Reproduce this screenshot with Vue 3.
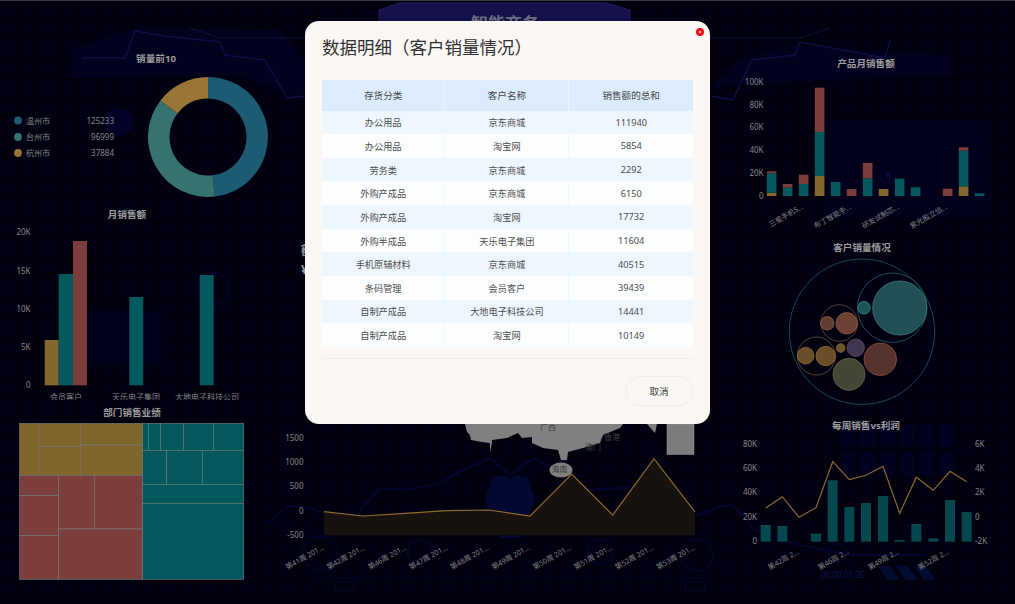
<script setup>
const rows = [
  ['办公用品', '京东商城', '111940'],
  ['办公用品', '淘宝网', '5854'],
  ['劳务类', '京东商城', '2292'],
  ['外购产成品', '京东商城', '6150'],
  ['外购产成品', '淘宝网', '17732'],
  ['外购半成品', '天乐电子集团', '11604'],
  ['手机原辅材料', '京东商城', '40515'],
  ['条码管理', '会员客户', '39439'],
  ['自制产成品', '大地电子科技公司', '14441'],
  ['自制产成品', '淘宝网', '10149']
]

const YEL = '#84672f'
const TEAL = '#04595f'
const RED = '#7c3e3d'

// donut
const legend = [
  { name: '温州市', value: 125233, color: '#1d5a73', y: 120.5 },
  { name: '台州市', value: 96999, color: '#36736f', y: 137 },
  { name: '杭州市', value: 37884, color: '#9a7636', y: 153 }
]
const total = legend.reduce((s, l) => s + l.value, 0)
let acc = 0
const pt = (r, a) => `${(208 + r * Math.sin(a)).toFixed(2)} ${(137 - r * Math.cos(a)).toFixed(2)}`
const arcs = legend.map((l) => {
  const a0 = (acc / total) * Math.PI * 2
  acc += l.value
  const a1 = (acc / total) * Math.PI * 2
  const big = a1 - a0 > Math.PI ? 1 : 0
  return {
    color: l.color,
    d: `M${pt(60, a0)} A60 60 0 ${big} 1 ${pt(60, a1)} L${pt(38.5, a1)} A38.5 38.5 0 ${big} 0 ${pt(38.5, a0)} Z`
  }
})

// monthly sales
const monthTicks = [['20K', 232], ['15K', 270.5], ['10K', 309], ['5K', 347], ['0', 385]]
const monthBars = [
  [44.7, 340, YEL], [58.7, 274, TEAL], [73, 241, RED],
  [129.3, 297, TEAL], [199.7, 275, TEAL]
].map(([x, y, c]) => ({ x, y, c, h: 385.3 - y }))
const monthLabels = [['会员客户', 66], ['天乐电子集团', 136], ['大地电子科技公司', 207]]

// treemap (coordinates measured at 3x)
const tm = (n) => n / 3
const tile = (x0, y0, x1, y1, c) => ({ x: tm(x0), y: 400 + tm(y0), w: tm(x1 - x0), h: tm(y1 - y0), c })
const TY = '#80652c'
const treeTiles = [
  tile(59, 70, 115, 226, TY), tile(115, 70, 241, 140, TY), tile(115, 140, 241, 226, TY),
  tile(241, 70, 428, 135, TY), tile(241, 135, 428, 226, TY),
  tile(59, 226, 176, 286, RED), tile(59, 286, 176, 406, RED), tile(59, 406, 176, 538, RED),
  tile(176, 226, 283, 387, RED), tile(283, 226, 428, 387, RED), tile(176, 387, 428, 538, RED),
  tile(428, 70, 445, 151, TEAL), tile(445, 70, 481, 151, TEAL), tile(481, 70, 550, 151, TEAL),
  tile(550, 70, 640, 151, TEAL), tile(640, 70, 731, 151, TEAL),
  tile(428, 151, 500, 253, TEAL), tile(500, 151, 607, 253, TEAL), tile(607, 151, 731, 253, TEAL),
  tile(428, 253, 731, 310, TEAL), tile(428, 310, 731, 538, TEAL)
]

// product bars (3x coordinates)
const prodX = [185, 233, 281, 329, 377, 425, 473, 521, 569, 617, 713, 761, 809]
const prodStacks = [
  [[458, 468, YEL], [400, 458, TEAL], [394, 400, RED]],
  [[443, 468, TEAL], [432, 443, RED]],
  [[432, 468, TEAL], [404, 432, RED]],
  [[408, 468, YEL], [276, 408, TEAL], [143, 276, RED]],
  [[426, 468, TEAL]],
  [[447, 468, RED]],
  [[415, 468, TEAL], [369, 415, RED]],
  [[447, 468, YEL]],
  [[416, 468, TEAL]],
  [[442, 468, TEAL]],
  [[446, 468, RED]],
  [[439, 468, YEL], [332, 439, TEAL], [322, 332, RED]],
  [[460, 468, TEAL]]
]
const prodBars = prodStacks.flatMap((stack, i) =>
  stack.map(([t, b, c]) => ({ x: 710 + (prodX[i] - 14.5) / 3, y: 40 + t / 3, h: (b - t) / 3, c }))
)
const prodTicks = [['100K', 81.7], ['80K', 104.7], ['60K', 127.3], ['40K', 150], ['20K', 172.7], ['0', 195.7]]
const prodLabels = [['三星手机S...', 804, 208], ['布丁智能手...', 852, 208], ['研发试制芯...', 900, 208], ['紫光股立信...', 948, 208]]

// bubbles
const bubbles = [
  { x: 862, y: 331.7, r: 72.7, f: 'none', s: '#1a5a62' },
  { x: 892.3, y: 307.7, r: 34.7, f: 'none', s: '#20666b' },
  { x: 899.7, y: 308, r: 27, f: '#224f53', s: '#3a8484' },
  { x: 864, y: 307.7, r: 6.3, f: '#1c5559', s: '#3a8484' },
  { x: 839.3, y: 323, r: 18.3, f: 'none', s: '#6e4a3a' },
  { x: 827.3, y: 323.3, r: 6.7, f: '#5e3d32', s: '#96604a' },
  { x: 846.7, y: 323.3, r: 10.7, f: '#6c4034', s: '#a05c48' },
  { x: 816.3, y: 356, r: 19, f: 'none', s: '#6c5038' },
  { x: 805.7, y: 355.7, r: 8.3, f: '#6a4e2c', s: '#94702e' },
  { x: 825.7, y: 356, r: 9.7, f: '#6a4e2c', s: '#94702e' },
  { x: 840.7, y: 348, r: 4.3, f: '#6c552b', s: '#86682c' },
  { x: 855.7, y: 347.7, r: 8.7, f: '#3e3650', s: '#6c4a4a' },
  { x: 880.3, y: 359.3, r: 16.3, f: '#56322c', s: '#96483c' },
  { x: 849, y: 374.3, r: 16, f: '#454536', s: '#686852' }
]

// weekly (centre)
const lineZ = [[72, 635], [188, 648], [315, 640], [440, 632], [566, 630], [690, 648], [815, 522], [938, 645], [1062, 476], [1185, 636]]
const linePts = lineZ.map(([x, y]) => `${(300 + x / 3).toFixed(1)},${(300 + y / 3).toFixed(1)}`).join(' ')
const areaPts = `324,535.3 ${linePts} 695,535.3`
const lineTicks = [['1500', 438], ['1000', 462], ['500', 486], ['0', 510.5], ['-500', 535]]
const weeks = ['第41周', '第42周', '第46周', '第47周', '第48周', '第49周', '第50周', '第51周', '第52周', '第53周']
const lineLabels = weeks.map((w, i) => [`${w} 201...`, 324.5 + i * 41.2, 549])

// weekly vs profit (right)
const wkX = [167, 217, 318, 368, 418, 468, 519, 569, 619, 670, 720, 770]
const wkTop = [330, 333, 356, 196, 276, 264, 243, 375, 327, 370, 255, 291]
const wkBars = wkX.map((x, i) => ({ x: 710 + (x - 15) / 3, y: 415 + wkTop[i] / 3, h: (380 - wkTop[i]) / 3 }))
const wkLine = [[167, 279], [217, 245], [267, 307], [318, 278], [368, 140], [418, 194], [468, 181], [519, 154], [569, 295], [619, 187], [670, 226], [720, 169], [770, 200]]
  .map(([x, y]) => `${(710 + x / 3).toFixed(1)},${(415 + y / 3).toFixed(1)}`).join(' ')
const wkYs = [443.7, 468, 492.3, 517, 541]
const wkLeft = ['80K', '60K', '40K', '20K', '0']
const wkRight = ['6K', '4K', '2K', '0', '-2K']
const wkLabels = [['第42周 2...', 799.5, 553], ['第46周 2...', 849.5, 553], ['第49周 2...', 899.5, 553], ['第52周 2...', 949.5, 553]]

// background tiles on the right
const bgTiles = []
for (let c = 0; c < 6; c++) for (let r = 0; r < 2; r++) bgTiles.push({ x: 841 + c * 19.6, y: 424 + r * 28, key: `${c}-${r}` })
</script>

<template>
  <div class="screen">
    <svg class="backdrop" viewBox="0 0 1015 604" aria-hidden="true">
      <defs>
        <pattern id="mesh" width="5" height="5" patternUnits="userSpaceOnUse">
          <path d="M5 0H0V5" fill="none" stroke="#03031c" stroke-width="0.5" />
        </pattern>
      </defs>
      <rect width="1015" height="604" fill="url(#mesh)" />
      <polygon points="72,50 130,28 280,30 304,60 304,100 240,75 110,78 72,78" fill="#02021e" />
      <polygon points="710,90 740,60 790,45 950,55 950,75 730,85" fill="#02021e" />
      <polyline points="190,28 220,38 305,38" class="bg-line" />
      <polyline points="710,38 800,38 830,28" class="bg-line" />
      <polyline points="82,58 110,58 125,58 135,31 165,36 220,42 225,55 265,60 287,98 305,96" class="bg-thick" />
      <polyline points="712,96 733,100 752,60 795,55 800,42 885,58 890,40" class="bg-thick" />
      <polyline points="270,523 287,506 307,507 337,518 358,513 380,488 410,490 443,482 457,473 490,458 510,475 533,458 570,477 590,490 637,487 667,513 693,517 720,507 733,505 755,530 800,545 850,555 920,555" class="bg-wave" />
      <circle cx="320" cy="553" r="17" class="bg-ring" />
      <circle cx="420" cy="552" r="12" class="bg-ring" />
      <circle cx="600" cy="552" r="12" class="bg-ring" />
      <circle cx="697" cy="555" r="16" class="bg-ring" />
      <circle cx="213" cy="289" r="16" class="bg-ring" />
      <circle cx="838" cy="553" r="9" class="bg-ring" />
      <polygon points="492,478 505,475 510,480 515,475 528,478 535,500 520,538 500,538 485,500" fill="#020830" />
      <rect x="86" y="310" width="75" height="56" rx="6" fill="#01011a" />
      <rect x="825" y="120" width="165" height="98" fill="#01011c" />
      <circle cx="888" cy="175" r="8" class="bg-ring" />
      <circle cx="888" cy="175" r="3" fill="#07073a" />
      <circle cx="119" cy="122" r="14" fill="#03032a" />
      <rect v-for="t in bgTiles" :key="t.key" :x="t.x" :y="t.y" width="15" height="23" rx="4" fill="#020220" />
      <polygon points="878,566 890,566 900,580 888,580" fill="#020c30" />
      <polygon points="896,566 908,566 918,580 906,580" fill="#020c30" />
      <polygon points="914,566 926,566 936,580 924,580" fill="#020c30" />
      <text x="821" y="578" class="bg-time">00:00:01:26</text>
      <rect x="335" y="582" width="20" height="8" fill="none" stroke="#06062e" />
      <rect x="685" y="582" width="20" height="8" fill="none" stroke="#06062e" />
      <line x1="315" y1="578" x2="700" y2="578" stroke="#04042c" />
    </svg>

    <div class="topline"></div>

    <div class="dash">
      <section class="col">
        <svg class="panel h200" viewBox="0 0 305 200">
          <text x="156" y="62" class="title">销量前10</text>
          <g v-for="l in legend" :key="l.name">
            <circle cx="18" :cy="l.y" r="3.9" :fill="l.color" />
            <text x="26" :y="l.y + 3" class="tick">{{ l.name }}</text>
            <text x="114" :y="l.y + 3" class="tick end">{{ l.value }}</text>
          </g>
          <path v-for="a in arcs" :key="a.color" :d="a.d" :fill="a.color" />
        </svg>
        <svg class="panel h200" viewBox="0 200 305 200">
          <text x="127" y="217.5" class="title">月销售额</text>
          <text v-for="t in monthTicks" :key="t[0]" x="30.5" :y="t[1] + 3" class="tick end">{{ t[0] }}</text>
          <rect v-for="b in monthBars" :key="b.x" :x="b.x" :y="b.y" :width="b.x === 58.7 ? 14.3 : 14" :height="b.h" :fill="b.c" />
          <text v-for="l in monthLabels" :key="l[0]" :x="l[1]" y="399.5" class="tick mid">{{ l[0] }}</text>
        </svg>
        <svg class="panel h204" viewBox="0 400 305 204">
          <text x="132" y="415.5" class="title">部门销售业绩</text>
          <rect v-for="(t, i) in treeTiles" :key="i" :x="t.x" :y="t.y" :width="t.w" :height="t.h" :fill="t.c" stroke="#75807a" stroke-width="0.6" />
        </svg>
      </section>

      <section class="col">
        <svg class="panel centre h604" viewBox="305 0 405 604">
          <polygon points="379,10 400,3 606,3 630,10 630,40 379,40" fill="#14104a" stroke="#2b2a70" stroke-width="0.7" />
          <text x="505" y="30" class="brand">智能商务</text>
          <text x="301" y="255" class="peek">额</text>
          <text x="301" y="274" class="peek">¥</text>

          <path d="M465,424 L467,432 L470,435 L471,440 L482,442 L490,443 L490,452 L492,443 L492,440 L507,438 L518,433 L522,438 L532,437 L532,443 L543,448 L558,450 L561,460 L567,460 L568,452 L583,448 L600,443 L603,435 L620,428 L623,424 Z" fill="#808080" />
          <path d="M647,424 L655,433 L657,424 Z" fill="#808080" />
          <ellipse cx="561" cy="470" rx="11.5" ry="7.5" fill="#808080" />
          <rect x="667" y="424" width="27" height="30.5" fill="#7c7c7c" stroke="#9a9a9a" stroke-width="0.5" />
          <text x="548" y="430" class="map-name">广西</text>
          <text x="593" y="450" class="map-name">澳门</text>
          <text x="612" y="440" class="map-name">香港</text>
          <text x="559.5" y="472" class="map-name">海南</text>

          <polygon :points="areaPts" fill="#17120e" />
          <polyline :points="linePts" fill="none" stroke="#8f6a2c" stroke-width="1.2" />
          <text v-for="t in lineTicks" :key="t[0]" x="303.5" :y="t[1] + 3" class="tick end">{{ t[0] }}</text>
          <text v-for="l in lineLabels" :key="l[0]" :x="l[1]" :y="l[2]" :transform="`rotate(-29 ${l[1]} ${l[2]})`" class="tick rot end">{{ l[0] }}</text>
        </svg>
      </section>

      <section class="col">
        <svg class="panel h235" viewBox="710 0 305 235">
          <text x="866" y="67" class="title">产品月销售额</text>
          <text v-for="t in prodTicks" :key="t[0]" x="763.5" :y="t[1] + 3" class="tick end">{{ t[0] }}</text>
          <rect v-for="(b, i) in prodBars" :key="i" :x="b.x" :y="b.y" width="9.6" :height="b.h" :fill="b.c" />
          <text v-for="l in prodLabels" :key="l[0]" :x="l[1]" :y="l[2]" :transform="`rotate(-30 ${l[1]} ${l[2]})`" class="tick rot end">{{ l[0] }}</text>
        </svg>
        <svg class="panel h180" viewBox="710 235 305 180">
          <text x="862" y="250.5" class="title">客户销量情况</text>
          <circle v-for="(b, i) in bubbles" :key="i" :cx="b.x" :cy="b.y" :r="b.r" :fill="b.f" :stroke="b.s" stroke-width="0.8" />
        </svg>
        <svg class="panel h189" viewBox="710 415 305 189">
          <text x="866" y="429" class="title">每周销售vs利润</text>
          <text v-for="(y, i) in wkYs" :key="'l' + i" x="757" :y="y + 3" class="tick end">{{ wkLeft[i] }}</text>
          <text v-for="(y, i) in wkYs" :key="'r' + i" x="975" :y="y + 3" class="tick">{{ wkRight[i] }}</text>
          <rect v-for="(b, i) in wkBars" :key="i" :x="b.x" :y="b.y" width="10" :height="b.h" fill="#05494f" />
          <polyline :points="wkLine" fill="none" stroke="#8f6a2c" stroke-width="1.2" />
          <text v-for="l in wkLabels" :key="l[0]" :x="l[1]" :y="l[2]" :transform="`rotate(-30 ${l[1]} ${l[2]})`" class="tick rot end">{{ l[0] }}</text>
        </svg>
      </section>
    </div>

    <div class="modal">
      <button class="close" type="button" aria-label="关闭"></button>
      <h2 class="modal-title">数据明细（客户销量情况）</h2>
      <div class="table">
        <div class="tr head">
          <div class="td">存货分类</div>
          <div class="td">客户名称</div>
          <div class="td">销售额的总和</div>
        </div>
        <div v-for="(r, i) in rows" :key="i" class="tr" :class="i % 2 ? 'even' : 'odd'">
          <div v-for="(c, j) in r" :key="j" class="td">{{ c }}</div>
        </div>
      </div>
      <div class="footer">
        <button class="cancel" type="button">取消</button>
      </div>
    </div>
  </div>
</template>

<style>
html, body { margin: 0; background: #00000e; }
</style>

<style scoped>
.screen {
  position: relative;
  width: 1015px;
  height: 604px;
  overflow: hidden;
  background: #00000e;
  font-family: "Noto Sans", "Noto Sans CJK SC", sans-serif;
}
.backdrop { position: absolute; inset: 0; width: 1015px; height: 604px; }
.bg-line { fill: none; stroke: #10103e; stroke-width: 1; }
.bg-thick { fill: none; stroke: #0e0e48; stroke-width: 1.4; }
.bg-wave { fill: none; stroke: #03062c; stroke-width: 2.2; }
.bg-ring { fill: none; stroke: #03052c; stroke-width: 1.5; }
.bg-time { font-size: 8px; fill: #0a1850; }
.topline { position: absolute; left: 0; right: 0; top: 0; height: 1px; background: #3a3a3e; }
.dash {
  position: relative;
  display: grid;
  grid-template-columns: 305px 405px 305px;
  height: 604px;
}
.col { display: flex; flex-direction: column; }
.panel { display: block; width: 100%; flex: none; overflow: hidden; }
.centre { overflow: visible; }
.h200 { height: 200px; }
.h204 { height: 204px; }
.h604 { height: 604px; }
.h235 { height: 235px; }
.h180 { height: 180px; }
.h189 { height: 189px; }
.title { font-size: 9.6px; font-weight: 700; fill: #9c9c9c; text-anchor: middle; }
.tick { font-size: 8px; fill: #868686; }
.rot { font-size: 7.2px; }
.end { text-anchor: end; }
.mid { text-anchor: middle; }
.peek { font-size: 12px; font-weight: 700; fill: #9a9a9a; }
.brand { font-size: 17px; font-weight: 700; fill: #6c6c80; text-anchor: middle; }
.map-name { font-size: 8px; fill: #3c3c3c; text-anchor: middle; }

.modal {
  position: absolute;
  left: 305px;
  top: 21px;
  width: 405px;
  height: 403px;
  box-sizing: border-box;
  padding: 15px 17px 0;
  border-radius: 14px;
  background: #fbf7f5;
  display: flex;
  flex-direction: column;
}
.modal-title {
  margin: 0;
  height: 44px;
  font-size: 17.5px;
  line-height: 22px;
  font-weight: 400;
  color: #303030;
}
.close {
  position: absolute;
  right: 6px;
  top: 7px;
  width: 8px;
  height: 8px;
  padding: 0;
  border: 0;
  border-radius: 50%;
  background: #f8050f;
}
.close::after {
  content: "";
  position: absolute;
  left: 3px;
  top: 3px;
  width: 2px;
  height: 2px;
  background: #ffd6d6;
}
.table { display: flex; flex-direction: column; width: 371px; }
.tr { display: grid; grid-template-columns: 123.4px 124px 123.6px; height: 23.65px; }
.td {
  display: flex;
  align-items: center;
  justify-content: center;
  font-size: 9.2px;
  color: #4e4e4e;
  border-right: 1px solid #eef6fe;
  box-sizing: border-box;
}
.td:last-child { border-right: 0; }
.head { height: 30.5px; background: #dcebfd; }
.head .td { font-size: 9.6px; color: #484848; border-right-color: #eaf3fd; }
.odd { background: #eef7ff; }
.even { background: #fbfdff; }
.footer {
  margin-top: 11.5px;
  padding-top: 17px;
  border-top: 1px solid #f0ece9;
  display: flex;
  justify-content: flex-end;
}
.cancel {
  width: 68px;
  height: 30px;
  padding: 0;
  border: 1px solid #f1ece9;
  border-radius: 15px;
  background: transparent;
  font-family: inherit;
  font-size: 9.6px;
  color: #404040;
}
</style>
